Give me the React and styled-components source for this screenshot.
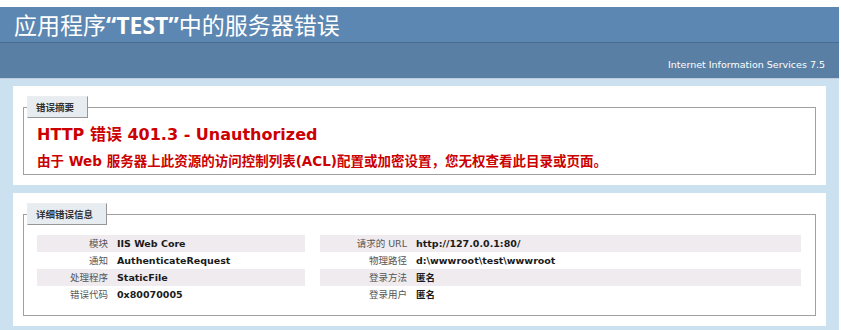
import React from "react";
import styled, { createGlobalStyle } from "styled-components";

const GlobalStyle = createGlobalStyle`
  html, body { margin: 0; padding: 0; background: #ffffff; }
  body {
    font-family: "DejaVu Sans", "Noto Sans CJK SC", sans-serif;
    font-size: 9.5px;
    color: #333333;
  }
`;

const Page = styled.div`
  width: 839px;
  padding-top: 7px;
`;

const Main = styled.div`
  background: #cbe1ef;
  padding-bottom: 6px;
`;

const Header = styled.header`
  background: #5c87b2;
  padding: 5px 14px;
  color: #ffffff;
`;

const Title = styled.h1`
  margin: 0;
  font-family: "Noto Sans CJK SC", sans-serif;
  font-size: 23px;
  line-height: 24px;
  font-weight: normal;
  color: #ffffff;
`;

const Latin = styled.span`
  font-family: "Open Sans", "Noto Sans", sans-serif;
  font-weight: bold;
`;

const ServerBar = styled.div`
  box-sizing: border-box;
  height: 37px;
  padding: 8px 14px 0;
  display: flex;
  align-items: center;
  justify-content: flex-end;
  background: #5a7fa5;
  border-top: 1px solid #4a6c8e;
  border-bottom: 1px solid #c1cfdd;
  color: #ffffff;
  font-size: 9.5px;
`;

const Content = styled.main`
  padding: 7px 0 0 13px;
  display: flex;
  flex-direction: column;
  gap: 8px;
`;

const Panel = styled.section`
  box-sizing: border-box;
  width: 813px;
  background: #ffffff;
  padding: 10px;
`;

const Fieldset = styled.fieldset`
  margin: 0;
  min-width: 0;
  border: 1px solid #a0a0a0;
  padding: 0 13px ${(p) => p.$pb}px 13px;
`;

const Legend = styled.legend`
  margin: 2px 0 7px -10px;
  padding: 4px 13px 4px 8px;
  background: #e7ecf0;
  border-top: 1px solid #ededed;
  border-left: 1px solid #ededed;
  border-right: 1px solid #969696;
  border-bottom: 1px solid #969696;
  color: #333333;
  font-family: "Noto Sans CJK SC", sans-serif;
  font-weight: bold;
  font-size: 9.5px;
  line-height: 12px;
`;

const ErrorTitle = styled.h2`
  margin: 0;
  color: #cc0000;
  font-size: 16px;
  line-height: 20px;
  font-weight: bold;
`;

const ErrorText = styled.h3`
  margin: 8px 0 0;
  color: #cc0000;
  font-size: 13.5px;
  line-height: 16px;
  font-weight: bold;
`;

const Details = styled.div`
  display: flex;
  gap: 15px;
`;

const Table = styled.table`
  width: ${(p) => p.$w}px;
  margin: 3px 0;
  border-collapse: collapse;
  border: none;
`;

const Row = styled.tr`
  background: ${(p) => (p.$alt ? "#efebef" : "transparent")};
`;

const Label = styled.td`
  box-sizing: border-box;
  width: ${(p) => p.$w}px;
  padding: 3px 9px 2px 0;
  text-align: right;
  vertical-align: top;
  color: #555555;
  font-weight: normal;
  font-size: 9.5px;
  line-height: 12px;
  white-space: nowrap;
`;

const Value = styled.td`
  padding: 3px 0 2px;
  vertical-align: top;
  color: #1a1a1a;
  font-weight: bold;
  font-size: 9.5px;
  line-height: 12px;
  white-space: nowrap;
`;

const leftRows = [
  ["模块", "IIS Web Core"],
  ["通知", "AuthenticateRequest"],
  ["处理程序", "StaticFile"],
  ["错误代码", "0x80070005"],
];

const rightRows = [
  ["请求的 URL", "http://127.0.0.1:80/"],
  ["物理路径", "d:\\wwwroot\\test\\wwwroot"],
  ["登录方法", "匿名"],
  ["登录用户", "匿名"],
];

function InfoTable({ rows, width, labelWidth }) {
  return (
    <Table $w={width}>
      <tbody>
        {rows.map(([k, v], i) => (
          <Row key={k} $alt={i % 2 === 0}>
            <Label $w={labelWidth}>{k}</Label>
            <Value>{v}</Value>
          </Row>
        ))}
      </tbody>
    </Table>
  );
}

export default function App() {
  return (
    <Page>
      <GlobalStyle />
      <Main>
        <Header>
          <Title>
            应用程序<Latin>“TEST”</Latin>中的服务器错误
          </Title>
        </Header>
        <ServerBar>Internet Information Services 7.5</ServerBar>
        <Content>
          <Panel>
            <Fieldset $pb={5}>
              <Legend>错误摘要</Legend>
              <ErrorTitle>HTTP 错误 401.3 - Unauthorized</ErrorTitle>
              <ErrorText>
                由于 Web 服务器上此资源的访问控制列表(ACL)配置或加密设置，您无权查看此目录或页面。
              </ErrorText>
            </Fieldset>
          </Panel>
          <Panel>
            <Fieldset $pb={9}>
              <Legend>详细错误信息</Legend>
              <Details>
                <InfoTable rows={leftRows} width={268} labelWidth={80} />
                <InfoTable rows={rightRows} width={481} labelWidth={96} />
              </Details>
            </Fieldset>
          </Panel>
        </Content>
      </Main>
    </Page>
  );
}
